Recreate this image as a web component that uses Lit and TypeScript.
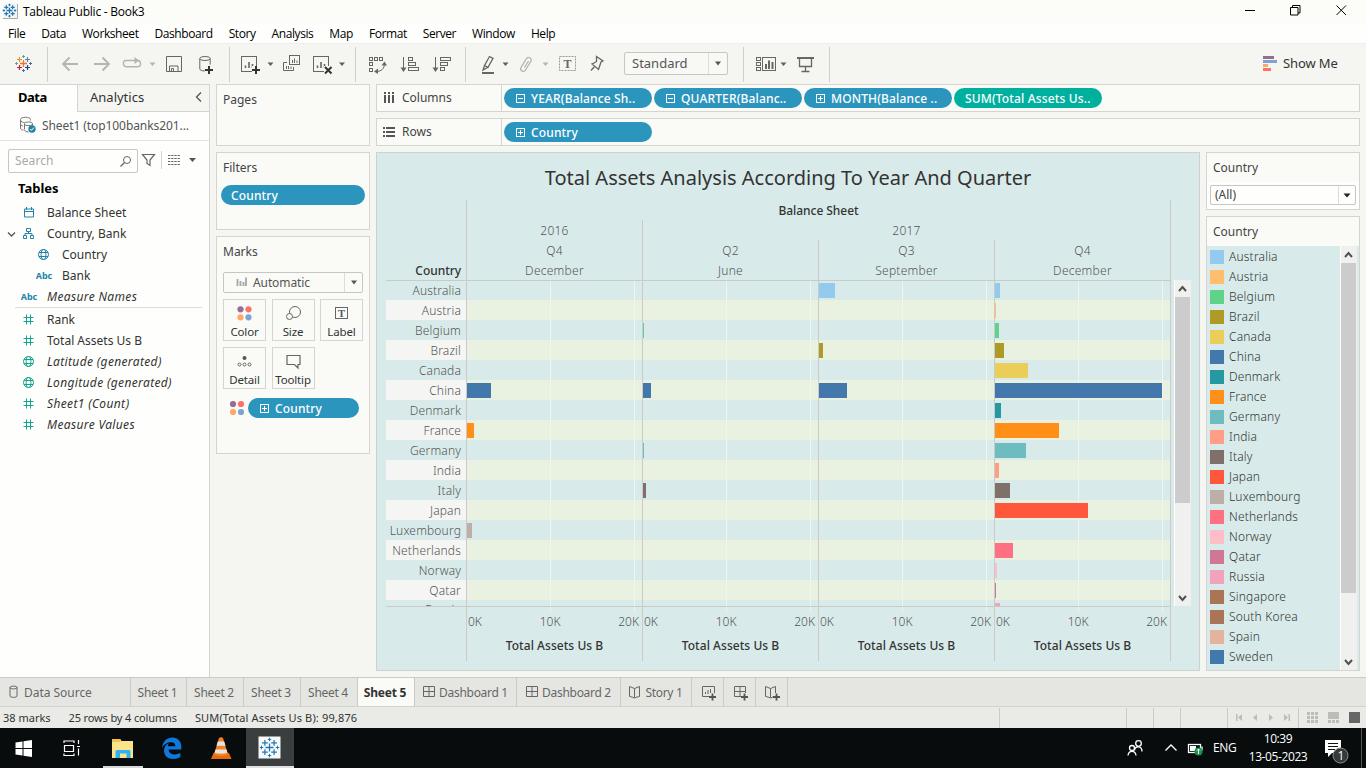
import { LitElement, html, svg, css, nothing } from "lit";
import { customElement } from "lit/decorators.js";

const COUNTRIES: [string, string][] = [
  ["Australia", "#93caed"], ["Austria", "#ffbe6d"], ["Belgium", "#60d388"], ["Brazil", "#ae9a27"],
  ["Canada", "#ebce5a"], ["China", "#4378ad"], ["Denmark", "#2698a1"], ["France", "#ff8f17"],
  ["Germany", "#6dbcc0"], ["India", "#ff9e84"], ["Italy", "#7f706a"], ["Japan", "#ff573c"],
  ["Luxembourg", "#bdafa8"], ["Netherlands", "#ff7082"], ["Norway", "#ffbec6"], ["Qatar", "#cf7794"],
  ["Russia", "#f0a3bb"], ["Singapore", "#aa7456"], ["South Korea", "#aa7456"], ["Spain", "#e3b39c"],
  ["Sweden", "#4378ad"], ["", "#93caed"],
];

interface Pane { quarter: string; month: string; bars: Record<string, number>; }
const PANES: Pane[] = [
  { quarter: "Q4", month: "December", bars: { China: 24, France: 7, Luxembourg: 5 } },
  { quarter: "Q2", month: "June", bars: { Belgium: 1, China: 8, Germany: 1, Italy: 3 } },
  { quarter: "Q3", month: "September", bars: { Australia: 16, Brazil: 4, China: 28 } },
  { quarter: "Q4", month: "December", bars: {
    Australia: 5, Austria: 1, Belgium: 4, Brazil: 9, Canada: 33, China: 167, Denmark: 6, France: 64,
    Germany: 31, India: 4, Italy: 15, Japan: 93, Netherlands: 18, Norway: 2, Qatar: 1, Russia: 5 } },
];

const plus = (x: number, y: number, r: number, c: string, w = 1) =>
  svg`<path d="M${x - r} ${y}H${x + r}M${x} ${y - r}V${y + r}" stroke=${c} stroke-width=${w} fill="none"/>`;
const caret = (x: number, y: number, c = "#5f5f5c") =>
  svg`<path d="M${x - 3} ${y - 1.5}h6l-3 3.6z" fill=${c} stroke="none"/>`;
const frame = (x: number, y: number, w: number, h: number, c = "#666663") =>
  svg`<rect x=${x} y=${y} width=${w} height=${h} fill="none" stroke=${c}/>`;
const spark = (x: number, y: number, cs: string[], k = 1) => svg`
  ${plus(x, y, 3.5 * k, cs[0], 1.3)}
  ${plus(x - 4 * k, y - 4 * k, 2.5 * k, cs[1], 1.2)}${plus(x + 4 * k, y - 4 * k, 2.5 * k, cs[2], 1.2)}
  ${plus(x - 4 * k, y + 4 * k, 2.5 * k, cs[3], 1.2)}${plus(x + 4 * k, y + 4 * k, 2.5 * k, cs[4], 1.2)}
  ${plus(x, y - 7 * k, 1.5 * k, cs[5])}${plus(x, y + 7 * k, 1.5 * k, cs[6])}
  ${plus(x - 7 * k, y, 1.5 * k, cs[5])}${plus(x + 7 * k, y, 1.5 * k, cs[6])}`;
const BLUES = Array(7).fill("#1f77b4");
const dots4 = (x: number, y: number) => svg`
  <circle cx=${x} cy=${y} r="3.1" fill="#976e93"/><circle cx=${x + 8} cy=${y} r="3.1" fill="#ff7166"/>
  <circle cx=${x} cy=${y + 8} r="3.1" fill="#ffa76b"/><circle cx=${x + 8} cy=${y + 8} r="3.1" fill="#7ca3d3"/>`;

const pillBox = (sign: string) => html`<svg class="pillbox" viewBox="0 0 9 9">
  <rect x=".5" y=".5" width="8" height="8" fill="none" stroke="#fff"/>
  <path d=${sign === "+" ? "M2 4.5h5M4.5 2v5" : "M2 4.5h5"} stroke="#fff"/></svg>`;

const BLUE = "#2383ab";
const GREEN = "#12a68c";
const hash = svg`<path d="M4.500 1.500v10M8.500 1.500v10M1.500 4.500h10M1.500 8.500h10" stroke=${GREEN} fill="none"/>`;
const globe = (c: string) => svg`<g stroke=${c} fill="none"><circle cx="6.500" cy="6.500" r="5"/>
  <ellipse cx="6.500" cy="6.500" rx="2.400" ry="5"/><path d="M2 4.500h9M2 8.500h9"/></g>`;
const fieldIcon = (k: string) => html`<svg class="ficon" viewBox="0 0 13 13">${
  k === "date" ? svg`<path d="M2.500 3h9v8h-9zM2.500 5.500h9M4.500 1v3M9.500 1v3" stroke=${BLUE} fill="none"/>`
  : k === "tree" ? svg`<path d="M4.500 1.500h4v3h-4zM1.500 8.500h3v3h-3zM8.500 8.500h3v3h-3zM6.500 4.500v2M3 8.500v-2h7v2" stroke=${BLUE} fill="none"/>`
  : k === "globe" ? globe(BLUE) : k === "geo" ? globe(GREEN) : hash}</svg>`;

interface Field { name: string; icon: string; cls?: string; }
const DIMS: Field[] = [
  { name: "Balance Sheet", icon: "date" }, { name: "Country, Bank", icon: "tree", cls: "open" },
  { name: "Country", icon: "globe", cls: "child" }, { name: "Bank", icon: "abc", cls: "child" },
  { name: "Measure Names", icon: "abc", cls: "gen" },
];
const MEAS: Field[] = [
  { name: "Rank", icon: "num" }, { name: "Total Assets Us B", icon: "num" },
  { name: "Latitude (generated)", icon: "geo", cls: "gen" }, { name: "Longitude (generated)", icon: "geo", cls: "gen" },
  { name: "Sheet1 (Count)", icon: "num", cls: "gen" }, { name: "Measure Values", icon: "num", cls: "gen" },
];

@customElement("app-root")
export class AppRoot extends LitElement {
  static styles = css`
    :host { display: flex; flex-direction: column; width: 1366px; height: 768px; overflow: hidden;
      background: #f5f5f2; font: 12px "Noto Sans", sans-serif; color: #333; white-space: nowrap; }
    * { box-sizing: border-box; }
    svg { display: block; flex: none; }
    .titlebar { height: 23px; background: #fcfdf9; display: flex; font: 12px/23px "Open Sans", sans-serif; color: #000; }
    .titlebar .name { flex: 1; letter-spacing: -.24px; }
    .menu { height: 20px; background: #fefffc; display: flex; gap: 16px; padding-left: 8px;
      font: 12px/22px "Open Sans", sans-serif; color: #000; letter-spacing: -.42px; }
    .toolbar { height: 41px; display: flex; border-top: 1px solid #eeefec; }
    .combo { display: flex; border: 1px solid #c6c7c4; border-radius: 2px; color: #555; background: #f8f8f5; }
    .combo .val { flex: 1; }
    .combo .drop { border-left: 1px solid #dcdcd9; display: flex; align-items: center; justify-content: center; }
    .toolbar .combo { width: 104px; height: 23px; margin-top: 8px; font-size: 13px; line-height: 21px; padding-left: 7px; }
    .toolbar .drop { width: 19px; }
    .showme { margin-left: 5px; font-size: 13px; line-height: 39px; color: #333; letter-spacing: -.1px; }

    .main { height: 593px; display: flex; }
    .data { width: 210px; border-right: 1px solid #d4d4d0; border-top: 1px solid #d4d4d0; background: #fefffc; }
    .tabs { display: flex; height: 27px; line-height: 25px; font-size: 13px; color: #333; }
    .tabs b { width: 77px; padding-left: 18px; color: #000; letter-spacing: -.5px; }
    .tabs .an { flex: 1; display: flex; padding-left: 12px; justify-content: space-between;
      border-left: 1px solid #d4d4d0; border-bottom: 1px solid #d4d4d0; background: #f5f5f2; }
    .source { display: flex; height: 29px; border-bottom: 1px solid #e2e3e0; line-height: 27px; color: #555; letter-spacing: -.08px; }
    .search { display: flex; height: 40px; padding: 8px 0 0 8px; }
    .search .box { width: 130px; height: 24px; border: 1px solid #c6c7c4; border-radius: 2px; display: flex;
      justify-content: space-between; color: #aaa; line-height: 22px; padding-left: 6px; letter-spacing: .1px; }
    .tables { height: 21px; line-height: 14px; font-size: 13px; font-weight: bold; color: #000; padding-left: 18px; letter-spacing: 0; }
    .field { display: flex; height: 21px; line-height: 20px; padding-left: 22px; align-items: center; }
    .ficon { width: 13px; height: 13px; margin-right: 12px; }
    .abc { width: 20px; margin: 0 8px 0 -3px; font-size: 9px; font-weight: bold; font-style: normal; color: #2383ab; letter-spacing: -.1px; text-align: center; }
    .child { padding-left: 37px; }
    .open { padding-left: 6px; }
    .open .chev { width: 12px; height: 12px; margin-right: 4px; }
    .gen { font-style: italic; letter-spacing: .35px; }
    .rule { height: 1px; margin: 0 7px 1px 15px; background: #deDFdc; }

    .cards { width: 154px; margin-left: 6px; display: flex; flex-direction: column; gap: 6px; }
    .card { border: 1px solid #d4d4d0; background: #fafbf7; color: #444; padding: 6px 6px 0; line-height: 18px; }
    .pages { height: 62px; } .filters { height: 78px; padding: 6px 4px 0; } .marks { height: 218px; }
    .filters .ttl { padding-left: 2px; }
    .pill { height: 20px; border-radius: 10px; background: #2c95be; color: #fff; line-height: 19px; font-weight: 500;
      display: flex; align-items: center; letter-spacing: .15px; }
    .pillbox { width: 9px; height: 9px; margin-right: 6px; }
    .filters .pill { margin-top: 8px; padding-left: 10px; }
    .marks .combo { height: 21px; margin-top: 11px; line-height: 19px; background: #fafbf7; letter-spacing: -.1px; }
    .marks .drop { width: 18px; }
    .btns { display: grid; grid-template-columns: repeat(3, 43px); column-gap: 5.5px; row-gap: 6px; margin-top: 6px; }
    .btn { height: 42px; border: 1px solid #d4d4d0; display: flex; flex-direction: column; align-items: center; }
    .btn span { line-height: 14px; color: #333; font-size: 11.5px; letter-spacing: -.15px; }
    .enc { display: flex; margin-top: 9px; }
    .enc .pill { width: 111px; padding-left: 12px; }

    .right { width: 984px; display: flex; flex-direction: column; gap: 6px; margin-left: 6px; }
    .shelf { height: 28px; border: 1px solid #d4d4d0; background: #fafbf7; display: flex; color: #444; line-height: 26px; }
    .shelf .lab { width: 125px; border-right: 1px solid #d4d4d0; display: flex; letter-spacing: 0; }
    .shelf .lab svg { margin-right: 6px; }
    .shelf .list { display: flex; gap: 2px; padding: 3px 0 0 2px; }
    .shelf .pill { width: 148px; padding-left: 12px; }
    .shelf .green { background: #00b09f; padding-left: 11px; }
    .below { display: flex; gap: 6px; }
    .chart { width: 824px; height: 519px; border: 1px solid #d0d1ce; background: #d8ebea; padding-left: 9px; }
    .heading { height: 47px; line-height: 50px; text-align: center; font-size: 20px; font-weight: 450; color: #333; letter-spacing: 0; padding-right: 9px; }
    .viz { display: grid; grid-template-columns: 80px 176px 176px 176px 177px 21px; color: #555; font-weight: 330; letter-spacing: .25px; }
    .hd { height: 20px; line-height: 22px; text-align: center; border-left: 1px solid #cacac8; }
    .hd.dark, .corner { color: #333; font-weight: 500; letter-spacing: -.05px; }
    .c4 { grid-column: 2 / 6; border-right: 1px solid #cacac8; }
    .c3 { grid-column: 3 / 6; border-right: 1px solid #cacac8; }
    .hd.last { border-right: 1px solid #cacac8; }
    .corner { text-align: right; height: 20px; line-height: 22px; padding-right: 5px; }
    .names, .pane { height: 327px; border-top: 1px solid #cacac8; border-bottom: 1px solid #cacac8; overflow: hidden; }
    .names div { height: 20px; line-height: 22px; text-align: right; padding-right: 5px; letter-spacing: .15px; }
    .names div:nth-child(even) { background: #f5f6f3; }
    .names div:first-child { height: 19px; line-height: 20px; }
    .names div:last-child { line-height: 19px; }
    .pane { border-left: 1px solid #cacac8; display: flex; flex-direction: column;
      background: linear-gradient(#f1f4f2, #f1f4f2) 83px 0 / 1px 100% no-repeat, linear-gradient(#f1f4f2, #f1f4f2) 167px 0 / 1px 100% no-repeat,
        repeating-linear-gradient(#d8ebea 0 20px, #e9f2e1 20px 40px) 0 -1px / 100% 400px; }
    .pane.last { border-right: 1px solid #cacac8; }
    .cell { flex: none; height: 20px; padding-top: 3px; }
    .cell:first-child { height: 19px; padding-top: 2px; }
    .bar { height: 15px; }
    .scroll { display: flex; flex-direction: column; background: #f0f1ee; border-left: 1px solid #fff; width: 17px; }
    .scroll .thumb { background: #cbcccb; width: 15px; }
    .scroll .thumb + svg { margin-top: auto; }
    .viz .scroll { margin-left: 3px; height: 326px; }
    .viz .thumb { height: 206px; }
    .axis { height: 54px; border-left: 1px solid #cacac8; text-align: center;
      background: linear-gradient(#f1f4f2, #f1f4f2) 83px 0 / 1px 4px no-repeat, linear-gradient(#f1f4f2, #f1f4f2) 167px 0 / 1px 4px no-repeat; }
    .axis.last { border-right: 1px solid #cacac8; }
    .ticks { width: 175px; display: flex; justify-content: space-between; padding: 5px 3px 0 1px; line-height: 20px; letter-spacing: 0; }
    .axt { color: #333; font-weight: 500; line-height: 28px; letter-spacing: .05px; }

    .side { width: 154px; display: flex; flex-direction: column; gap: 6px; }
    .side .fcard { height: 58px; border: 1px solid #d4d4d0; background: #fefffc; }
    .side .t { height: 29px; line-height: 30px; padding-left: 6px; background: #fafbf7; color: #444; letter-spacing: 0; }
    .fcard .combo { height: 20px; margin: 3px 3px 0; line-height: 18px; background: #fefffc; padding-left: 4px; color: #444; }
    .fcard .drop { width: 17px; }
    .legend { height: 455px; border: 1px solid #d4d4d0; background: #d8ebea; }
    .lbody { height: 424px; display: flex; justify-content: space-between; overflow: hidden; padding-right: 2px; }
    .lbody .thumb { height: 330px; flex: none; }
    .li { height: 20px; display: flex; align-items: center; color: #333; font-weight: 330; line-height: 20px; padding-left: 3px; letter-spacing: .18px; }
    .li:first-child { margin-top: 1px; }
    .sw { width: 14px; height: 14px; margin-right: 5px; }

    .sheets { height: 30px; display: flex; border-top: 1px solid #cacac8; background: #e5e6e2; border-bottom: 1px solid #d2d3cf;
      line-height: 29px; color: #666; font-size: 12px; letter-spacing: -.3px; }
    .sheets div { border-right: 1px solid #cacac8; display: flex; justify-content: center; padding-right: 2px; }
    .sheets .s0 { width: 131px; justify-content: flex-start; letter-spacing: -.03px; }
    .s56 { width: 56px; } .s57 { width: 57px; } .s102 { width: 102px; } .s104 { width: 104px; } .s71 { width: 71px; }
    .sheets .s32 { width: 32px; padding-right: 0; }
    .sheets .on { background: #fafbf7; font-weight: bold; color: #333; letter-spacing: -.2px; }
    .status { height: 21px; background: #eaebe7; display: flex; line-height: 21px; font-size: 11px; color: #333; padding-left: 3px; }
    .status span { margin-right: 18px; }
    .status .dims { letter-spacing: -.14px; }
    .status .sum { letter-spacing: .15px; }
    .status svg { margin-left: auto; }
    .task { height: 40px; background: #080c0d; display: flex; color: #fff; font: 12px "Open Sans", sans-serif; }
    .task .gap { flex: 1; }
    .eng { width: 35px; line-height: 39px; letter-spacing: -.4px; }
    .clock { width: 60px; margin-right: 10px; text-align: center; line-height: 18px; padding-top: 2px; letter-spacing: -.4px; }
  `;

  private titlebar() {
    return html`<div class="titlebar">
      <svg width="23" height="23" viewBox="0 0 23 23"><path d="M3 3.500h14.500v15H3z" fill="#f4f6f4"/><path d="M17.500 4v14.500H3" stroke="#aaa" fill="none"/>${spark(9.5, 10.5, BLUES, 0.8)}</svg>
      <span class="name">Tableau Public - Book3</span>
      <svg width="136" height="23" viewBox="1230 0 136 23" stroke="#000" fill="none">
        <path d="M1245 10.500h10M1290.500 7.500h7.500v7.500h-7.500zM1292.500 7.500v-2h7.500v7.500h-2M1336.500 5.500l9.500 9.500M1346 5.500l-9.500 9.500"/></svg>
    </div>
    <div class="menu">${["File", "Data", "Worksheet", "Dashboard", "Story", "Analysis", "Map", "Format", "Server", "Window", "Help"].map((m) => html`<span>${m}</span>`)}</div>`;
  }

  private toolbar() {
    const g = "#666663", l = "#b4b5b2", sep = "#cfd0cc";
    return html`<div class="toolbar">
      <svg width="624" height="40" viewBox="0 44 624 40" fill="none" stroke=${g}>
        ${spark(23.5, 63.5, ["#e8762d", "#eb9129", "#5b879b", "#c72035", "#1f447e", "#7099a6", "#5c6692"])}
        <path d="M47.500 47v35M229.500 47v35M355.500 47v35M465.500 47v35" stroke=${sep}/>
        <path d="M78 64H63M69.500 57.500L63 64l6.500 6.500M94 64h15M102.500 57.500L109 64l-6.500 6.500" stroke=${l} stroke-width="1.800"/>
        <path d="M133 60.500h-7a2.500 2.500 0 0 0-2.500 3.200a3 3 0 0 0 2.500 3h12a2.500 2.500 0 0 0 2.500-3c0-2-1-3.200-2.500-3.200h-5" stroke=${l} stroke-width="1.400"/>
        <path d="M134.500 57v7l4.500-3.500z" fill=${l} stroke="none"/>${caret(152.5, 64, l)}
        <path d="M166.500 56.500h15v15h-15zM169.500 71v-5h8.500v5M171.500 71v-2.500h2V71"/>
        <ellipse cx="205" cy="58.500" rx="5.200" ry="2"/><path d="M199.800 58.500v10.500c0 1 2 2 5 2M210.200 58.500v6"/>
        ${plus(209, 70, 4, "#333", 2)}
        ${frame(241.5, 56.5, 15, 15)}<path d="M245.500 68v-2.500M249 68v-6M252.500 68v-4" stroke-width="1.600"/>
        <rect x="252" y="66" width="8" height="8" fill="#f5f5f2" stroke="none"/>${plus(256, 70, 4, "#333", 2)}${caret(270.5, 64)}
        ${frame(289.5, 55.5, 10, 9)}<path d="M292.500 63v-3M294.500 63v-4.500M297 63v-2.500M287 62.500h-3.500v8h10V67M286.500 69v-3M288.500 69v-3M291 69v-2.500"/>
        ${frame(313.5, 56.5, 15, 15)}<path d="M317.500 68v-2.500M321 68v-6M324.500 68v-4" stroke-width="1.600"/>
        <rect x="324" y="66" width="9" height="8" fill="#f5f5f2" stroke="none"/><path d="M325 67l6.500 6.500M331.500 67l-6.500 6.500" stroke="#333" stroke-width="2"/>${caret(342, 64)}
        ${[369.5, 374.5, 379.5].map((x) => frame(x, 57.5, 3, 3))}${frame(369.5, 62.5, 3, 3)}${frame(369.5, 68.5, 3, 3)}
        <path d="M384.500 63.500c0 5-3 8-8.500 8"/><path d="M381.500 65.500l3-4 2.500 4zM378 68.500l-4 3 4 2.500z" fill=${g} stroke="none"/>
        <path d="M403.500 57v13M435.500 57v13"/><path d="M400.500 67.500h6l-3 4.500zM432.500 67.500h6l-3 4.500z" fill=${g} stroke="none"/>
        ${frame(408.5, 57.5, 4, 3)}${frame(408.5, 62.5, 7, 3)}${frame(408.5, 67.5, 10, 3)}
        ${frame(440.5, 57.5, 10, 3)}${frame(440.5, 62.5, 7, 3)}${frame(440.5, 67.5, 4, 3)}
        <path d="M489.500 56.500l3.500 1.800-5 9-3.500-1.800zM484.500 65.500l-1.500 4.500 4.500-2.500" stroke-width="1.300"/>
        <path d="M482 73h12" stroke-width="2"/>${caret(505.5, 64)}
        <path d="M522 66l4.500-7.500a2.600 2.600 0 0 1 4.500 2.500l-5.500 9a2.500 2.500 0 0 1-4.500-2.500l4.500-7.500M524.500 67.500l4-6.500" stroke=${l} stroke-width="1.300"/>${caret(545.5, 64, l)}
        <rect x="559.500" y="56.500" width="16" height="14" stroke-dasharray="2 1" stroke="#999"/>
        <text x="563.500" y="68" font-family="Liberation Serif" font-weight="bold" font-size="12" fill="#666" stroke="none">T</text>
        <path d="M596.500 56.500l6.500 4.500-2 1-1.500 4.500-1 3-6.500-5.500 2-1 2.500-1.500zM594.500 66.500l-3.500 4" stroke-width="1.300"/>
      </svg>
      <div class="combo"><span class="val">Standard</span><span class="drop"><svg width="8" height="5" viewBox="0 0 8 5"><path d="M1 .5h6L4 4.500z" fill="#555"/></svg></span></div>
      <svg width="550" height="40" viewBox="728 44 550 40" fill="none" stroke=${g}>
        <path d="M743.500 47v35M829.500 47v35" stroke=${sep}/>
        ${[57.5, 62.5, 67.5].map((y) => frame(756.5, y, 4, 3))}${frame(762.5, 57.5, 13, 13)}
        <path d="M766 69v-5M769 69v-8.500M772.500 69v-7" stroke-width="2"/>${caret(783.5, 64)}
        <path d="M797 58h17" stroke-width="2"/><path d="M799.500 58v8.500h12V58M805.500 66.500v5M801.500 71.500h8" stroke-width="1.300"/>
        <g stroke="none"><path d="M1263 56h11v3h-11z" fill="#976e93"/><path d="M1263 60h14v3h-14z" fill="#7ca3d3"/><path d="M1263 64h5v3h-5z" fill="#ffa76b"/><path d="M1263 68h8v3h-8z" fill="#ff7166"/></g>
      </svg>
      <span class="showme">Show Me</span>
    </div>`;
  }

  private field(f: Field) {
    return html`<div class="field ${f.cls ?? ""}">
      ${f.cls === "open" ? html`<svg class="chev" viewBox="0 0 12 12"><path d="M2 4.500l3.500 3.500L9 4.500" stroke="#555" stroke-width="1.300" fill="none"/></svg>` : nothing}
      ${f.icon === "abc" ? html`<span class="abc">Abc</span>` : fieldIcon(f.icon)}<span>${f.name}</span></div>`;
  }

  private data() {
    return html`<div class="data">
      <div class="tabs"><b>Data</b><div class="an"><span>Analytics</span>
        <svg width="18" height="26" viewBox="191 85 18 26"><path d="M201 92.500l-4.500 4.500 4.500 4.500" stroke="#555" stroke-width="1.300" fill="none"/></svg></div></div>
      <div class="source">
        <svg width="42" height="28" viewBox="0 112 42 28" fill="none" stroke="#777"><path d="M20.500 128v-8.500c0-3 10-3 10 0v1M20.500 120c0 2 3 2.500 4 2.500M20.500 124c0 1.500 1.500 2 2.500 2M20.500 128c0 1.500 1.500 2 3 2"/>
          <path d="M24.500 129.500v-6c0-2 8-2 8 0v3.500M24.500 124.500c1 1.500 6 1.500 8 0M24.500 130c0 1 2 2 4 2"/><circle cx="32" cy="129" r="3.700" fill="#2383ab" stroke="none"/><path d="M30.200 129l1.300 1.400 2.400-2.800" stroke="#fff"/></svg>
        <span>Sheet1 (top100banks201...</span></div>
      <div class="search"><div class="box"><span>Search</span>
          <svg width="20" height="22" viewBox="117 149 20 22" fill="none" stroke="#666"><circle cx="127" cy="159" r="3.500"/><path d="M124.500 161.500l-4 4" stroke-width="1.300"/></svg></div>
        <svg width="70" height="24" viewBox="138 149 70 24" fill="none" stroke="#666"><path d="M142.500 154.500h12l-4.500 5.500v5.500l-3-2v-3.500z" stroke-width="1.200"/><path d="M161.500 151v18" stroke="#d4d4d0"/>
          <path d="M168 155.500h12M168 158.500h12M168 161.500h12M168 164.500h12" stroke-dasharray="2.300 .9"/><path d="M189 158h7l-3.500 4z" fill="#555" stroke="none"/></svg></div>
      <div class="tables">Tables</div>
      ${DIMS.map((f) => this.field(f))}<div class="rule"></div>${MEAS.map((f) => this.field(f))}
    </div>`;
  }

  private cards() {
    const btn = (t: string, i: unknown) => html`<div class="btn"><svg width="41" height="25" viewBox="0 0 41 25" fill="none" stroke="#666">${i}</svg><span>${t}</span></div>`;
    return html`<div class="cards">
      <div class="card pages">Pages</div>
      <div class="card filters"><div class="ttl">Filters</div><div class="pill">Country</div></div>
      <div class="card marks"><div>Marks</div>
        <div class="combo"><svg width="29" height="19" viewBox="0 0 29 19"><path d="M13.500 6v7M16.500 8v5M19.500 9v4M22 4.500v8.500" stroke="#aaa" stroke-width="1.900"/></svg><span class="val">Automatic</span><span class="drop"><svg width="8" height="5" viewBox="0 0 8 5"><path d="M1 .5h6L4 4.500z" fill="#555"/></svg></span></div>
        <div class="btns">
          ${btn("Color", svg`<g stroke="none">${dots4(16.5, 9.3)}</g>`)}
          ${btn("Size", svg`<circle cx="22" cy="12" r="5.500"/><circle cx="16.500" cy="16.500" r="3" fill="#fafbf7"/>`)}
          ${btn("Label", svg`<rect x="14.500" y="7.500" width="12" height="11"/><text x="17" y="17" font-family="Liberation Serif" font-weight="bold" font-size="10.500" fill="#555" stroke="none">T</text>`)}
          ${btn("Detail", svg`<circle cx="20.500" cy="10" r="2" fill="#555" stroke="none"/><circle cx="15.500" cy="16.500" r="1.500"/><circle cx="20.500" cy="16.500" r="1.500"/><circle cx="25.500" cy="16.500" r="1.500"/>`)}
          ${btn("Tooltip", svg`<path d="M14 7.500h13v9h-2v3.500l-3.500-3.500H14z" stroke-width="1.200"/>`)}
        </div>
        <div class="enc"><svg width="25" height="20" viewBox="223 398 25 20">${dots4(233, 404)}</svg><div class="pill">${pillBox("+")}Country</div></div>
      </div></div>`;
  }

  private shelf(name: string, icon: unknown, pills: [string, string][]) {
    return html`<div class="shelf"><div class="lab"><svg width="19" height="26" viewBox="0 0 19 26" fill="#555">${icon}</svg>${name}</div>
      <div class="list">${pills.map(([s, t]) => html`<div class="pill ${s ? "" : "green"}">${s ? pillBox(s) : nothing}<span>${t}</span></div>`)}</div></div>`;
  }

  private chart() {
    const last = (i: number) => (i === 3 ? "last" : "");
    const rows = COUNTRIES.slice(0, 17);
    return html`<div class="chart"><div class="heading">Total Assets Analysis According To Year And Quarter</div>
      <div class="viz">
        <span></span><div class="hd dark c4">Balance Sheet</div><span></span>
        <span></span><div class="hd">2016</div><div class="hd c3">2017</div><span></span>
        <span></span>${PANES.map((p, i) => html`<div class="hd ${last(i)}">${p.quarter}</div>`)}<span></span>
        <div class="corner">Country</div>${PANES.map((p, i) => html`<div class="hd ${last(i)}">${p.month}</div>`)}<span></span>
        <div class="names">${rows.map(([n]) => html`<div>${n}</div>`)}</div>
        ${PANES.map((p, i) => html`<div class="pane ${last(i)}">${rows.map(([n, c]) => html`<div class="cell">${
          p.bars[n] ? html`<div class="bar" style="width:${p.bars[n]}px;background:${c}"></div>` : nothing}</div>`)}</div>`)}
        ${this.scroll()}
        <span></span>${PANES.map((_, i) => html`<div class="axis ${last(i)}"><div class="ticks"><span>0K</span><span>10K</span><span>20K</span></div><div class="axt">Total Assets Us B</div></div>`)}
      </div></div>`;
  }

  private scroll() {
    const a = (d: string) => html`<svg width="16" height="17" viewBox="0 0 16 17"><path d=${d} stroke="#505050" stroke-width="2" fill="none"/></svg>`;
    return html`<div class="scroll">${a("M4 11l3.500-4 3.500 4")}<div class="thumb"></div>${a("M4 7l3.500 4 3.500-4")}</div>`;
  }

  private side() {
    return html`<div class="side">
      <div class="fcard"><div class="t">Country</div><div class="combo"><span class="val">(All)</span><span class="drop"><svg width="8" height="5" viewBox="0 0 8 5"><path d="M.5 .5h7L4 4.500z" fill="#222"/></svg></span></div></div>
      <div class="legend"><div class="t">Country</div><div class="lbody"><div>${COUNTRIES.map(([n, c]) => html`<div class="li"><span class="sw" style="background:${c}"></span>${n}</div>`)}</div>${this.scroll()}</div></div>
    </div>`;
  }

  private bottom() {
    const g = "#666663";
    const dash = html`<svg width="18" height="28" viewBox="0 0 18 28" fill="none" stroke=${g}><path d="M2.500 8.500h11v10h-11zM8 8.500v10M2.500 13.500h11"/></svg>`;
    const add = (i: unknown) => html`<div class="s32"><svg width="31" height="28" viewBox="0 0 31 28" fill="none" stroke=${g}>${i}<path d="M17 15h7v8h-7z" fill="#e5e6e2" stroke="none"/>${plus(20.5, 19, 3.5, "#555", 1.8)}</svg></div>`;
    const book = "M9.500 8.500l2.500 1 2.500 1 2.500-1 2.500-1v10l-2.500 .500-2.500 1-2.500-1-2.500-.500zM14.500 10.500v9";
    return html`<div class="sheets">
      <div class="s0"><svg width="24" height="28" viewBox="0 0 24 28" fill="none" stroke=${g}><path d="M10 9.500v8.500c0 1.800 7 1.800 7 0V9.500c0-1.800-7-1.800-7 0c0 1.800 7 1.800 7 0"/></svg>Data Source</div>
      <div class="s56">Sheet 1</div><div class="s57">Sheet 2</div><div class="s57">Sheet 3</div><div class="s57">Sheet 4</div><div class="s57 on">Sheet 5</div>
      <div class="s102">${dash}Dashboard 1</div><div class="s104">${dash}Dashboard 2</div>
      <div class="s71"><svg width="18" height="28" viewBox="7 0 18 28" fill="none" stroke=${g}><path d=${book}/></svg>Story 1</div>
      ${add(svg`<path d="M10.500 8.500h12v10h-12zM13.500 16v-2M16 16v-4M18.500 16v-5"/>`)}
      ${add(svg`<path d="M10.500 8.500h11v10h-11zM16 8.500v10M10.500 13.500h11"/>`)}
      ${add(svg`<path d=${book}/>`)}
    </div>
    <div class="status"><span>38 marks</span><span class="dims">25 rows by 4 columns</span><span class="sum">SUM(Total Assets Us B): 99,876</span>
      <svg width="367" height="21" viewBox="999 707 367 21"><path d="M999.500 708v20M1126.500 708v20M1153.500 708v20M1180.500 708v20M1227.500 708v20M1298.500 708v20" stroke="#cacac8"/>
        <g fill="#bcbdba"><path d="M1236 714h1.500v7h-1.500zM1242 714v7l-4-3.500zM1257 714v7l-4-3.500zM1269 714v7l4-3.500zM1284 714v7l4-3.500zM1288.500 714h1.500v7h-1.500z"/>
        ${[0, 4, 8].map((y) => [0, 4, 8].map((x) => svg`<rect x=${1307 + x} y=${712 + y} width="3" height="3"/>`))}
        <path d="M1328 712h11v7h-11zM1328 720h3v3h-3zM1332 720h3v3h-3zM1336 720h3v3h-3z"/></g><rect x="1349" y="712" width="11" height="11" fill="#666"/></svg></div>`;
  }

  private task() {
    return html`<div class="task">
      <svg width="294" height="40" viewBox="0 728 294 40">
        <path d="M15.500 742.500l7-1v6.500h-7zM23.500 741.300l8.500-1.300v8h-8.500zM15.500 749h7v6.500l-7-1zM23.500 749h8.500v8l-8.500-1.300z" fill="#fff"/>
        <path d="M64 743v-2h10v2M64.500 745.500h9v6h-9zM64 753.500v2h10v-2M78.500 740v4M78.500 748.500v7M77 746.500h3" fill="none" stroke="#fff" stroke-width="1.200"/>
        <path d="M112 739h8l1.500 2H133v17h-21z" fill="#fbe38a"/><path d="M112 739h8.500v3H112z" fill="#f0c44c"/><path d="M115.500 758v-6.500q0-1.500 1.500-1.500h12q1.500 0 1.500 1.500v6.500h-4v-4.500h-6.500v4.500z" fill="#2db3f5"/>
        <path d="M103 766h40v2h-40z" fill="#d8d8d8"/>
        <path d="M163 747.500c1-6.500 5-10 10.500-10c5.500 0 8.800 4 8.800 9v3h-12.700c.2 3.500 3 5 6 5c2.300 0 4-.7 5.700-1.700v4.300c-2 1.300-4.300 1.900-7 1.900c-5.500 0-9.300-3.500-9.300-8.500c0-3.300 1.800-6 4.800-7.300c-.6 1-.9 2-1 3h7.500c.1-2.300-1.400-3.900-4.300-3.900c-4 0-7 2-9 5.200z" fill="#0f78dc" transform="translate(-1 0)"/>
        <path d="M213.500 753h15.500l2.500 6h-20.500z" fill="#e66a10"/><path d="M219 738q2-1.500 4 0l5 16.500q-7 3-14 0z" fill="#f58220"/><path d="M217.800 741.500h6.400l1.300 4.200h-9zM215.500 749.500h11l1 3.200q-6.500 2-13 0z" fill="#e4e4e4"/>
        <path d="M246 728h48v40h-48z" fill="#3b3e3e"/><path d="M246 766h48v2h-48z" fill="#e0e0e0"/><path d="M258.500 736.500h22v22h-22z" fill="#f7f8f8"/>${spark(269.5, 747.5, BLUES, 1.15)}
      </svg><span class="gap"></span>
      <svg width="93" height="40" viewBox="1120 728 93 40" fill="none" stroke="#fff" stroke-width="1.300">
        <circle cx="1138.500" cy="743.500" r="2.800"/><path d="M1134.500 750.500c.5-5 7.500-5 7.500 1"/><circle cx="1132" cy="748" r="2.500"/><path d="M1128 755.500c.5-5.500 7.500-5.500 8 0"/>
        <path d="M1165.500 750.500l5.500-5.500 5.500 5.500"/><rect x="1188.500" y="744.500" width="12" height="8"/><path d="M1202 746.500v4"/><path d="M1190 746h6v5h-6z" fill="#fff" stroke="none"/><circle cx="1198.500" cy="751.500" r="4" fill="#16934a" stroke="none"/><path d="M1198.500 749v5M1197 750.500l1.500-1.500 1.500 1.500" stroke-width="1"/></svg>
      <span class="eng">ENG</span><span class="clock">10:39<br>13-05-2023</span>
      <svg width="48" height="40" viewBox="1318 728 48 40"><path d="M1325 740h16v13h-9l-4 4v-4h-3z" fill="#fff"/><path d="M1328 743.500h10M1328 746.500h10M1328 749.500h7" stroke="#111"/>
        <circle cx="1340.500" cy="755.500" r="7.500" fill="#35393a" stroke="#8b8e8e"/><text x="1337.500" y="760" font-family="Open Sans" font-size="12" fill="#fff">1</text><path d="M1361.500 728v40" stroke="#555"/></svg>
    </div>`;
  }

  render() {
    const colIcon = svg`<path d="M7 7h2v2H7zM11 7h2v2h-2zM15 7h2v2h-2zM7 10h2v8H7zM11 10h2v8h-2zM15 10h2v8h-2z"/>`;
    const rowIcon = svg`<path d="M6 8h2v2H6zM6 12h2v2H6zM6 16h2v2H6zM9 8h9v2H9zM9 12h9v2H9zM9 16h9v2H9z"/>`;
    return html`${this.titlebar()}${this.toolbar()}
      <div class="main">${this.data()}${this.cards()}
        <div class="right">
          ${this.shelf("Columns", colIcon, [["-", "YEAR(Balance Sh.."], ["-", "QUARTER(Balanc.."], ["+", "MONTH(Balance .."], ["", "SUM(Total Assets Us.."]])}
          ${this.shelf("Rows", rowIcon, [["+", "Country"]])}
          <div class="below">${this.chart()}${this.side()}</div>
        </div></div>
      ${this.bottom()}${this.task()}`;
  }
}
